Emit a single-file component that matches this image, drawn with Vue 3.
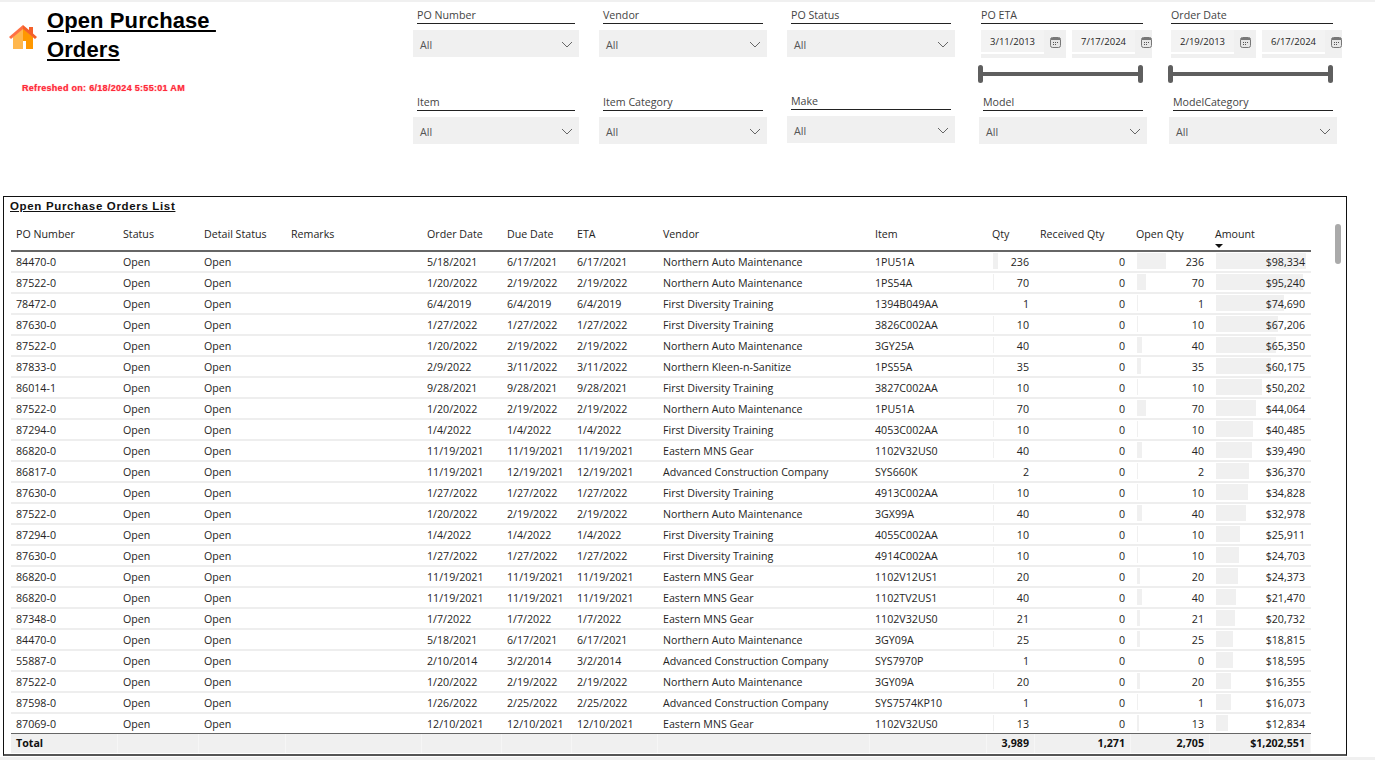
<template>
  <div class="page">
    <header class="top">
      <div class="brand">
        <svg class="home" viewBox="0 0 28 24">
          <path d="M4 12 L14 3 V24 H11 V16 H4 Z M4 16 H11 V24 H4 Z" fill="#ffb74d" />
          <path d="M14 3 L24 12 V24 H17 V16 H14 Z" fill="#ff9800" />
          <path d="M14 0 L0 12 L2 14 L14 4 Z" fill="#ff7043" />
          <path d="M14 0 L20 5 V2 H24 V8.5 L28 12 L26 14 L14 4 Z" fill="#f4602a" />
        </svg>
        <div class="brand-text">
          <h1 class="title">Open Purchase <br />Orders</h1>
          <div class="refreshed">Refreshed on: 6/18/2024 5:55:01 AM</div>
        </div>
      </div>

      <div class="filters">
        <div v-for="f in slicers" :key="f.label" class="slicer" :class="f.cls">
          <div class="slicer-label">{{ f.label }}</div>
          <div v-if="f.dates" class="date-block">
            <div class="date-row">
              <div v-for="d in f.dates" :key="d" class="date-box">
                <span class="date-val">{{ d }}</span>
                <svg class="cal" viewBox="0 0 11 11">
                  <rect x="0.5" y="0.5" width="10" height="10" rx="2" fill="#e6e6e6" stroke="#777" />
                  <rect x="1" y="1" width="9" height="2" fill="#777" />
                  <path d="M3 5.5H4M5 5.5H6M7 5.5H8M3 7.5H4M5 7.5H6" stroke="#555" />
                </svg>
              </div>
            </div>
            <div class="range">
              <span class="knob"></span>
              <span class="track"></span>
              <span class="knob"></span>
            </div>
          </div>
          <div v-else class="dropdown">
            <span>All</span>
            <svg class="chev" viewBox="0 0 12 7"><path d="M1 1 L6 6 L11 1" fill="none" stroke="#666" /></svg>
          </div>
        </div>
      </div>
    </header>

    <section class="panel">
      <div class="panel-title">Open Purchase Orders List</div>
      <div class="table">
        <div class="row head">
          <div v-for="c in columns" :key="c.key" class="cell">
            {{ c.label }}
            <span v-if="c.key === 'amount'" class="sort"></span>
          </div>
        </div>
        <div class="body">
          <div v-for="(r, i) in rows" :key="i" class="row">
            <div v-for="c in columns" :key="c.key" class="cell" :class="{ num: c.num }">
              <span v-if="c.bar && barWidth(c, r)" class="bar" :style="{ width: barWidth(c, r) + 'px' }"></span>
              <span class="val">{{ c.money ? money(r[c.key]) : r[c.key] }}</span>
            </div>
          </div>
        </div>
        <div class="row total">
          <div class="cell">Total</div>
          <div class="cell"></div>
          <div class="cell"></div>
          <div class="cell"></div>
          <div class="cell"></div>
          <div class="cell"></div>
          <div class="cell"></div>
          <div class="cell"></div>
          <div class="cell"></div>
          <div class="cell num">3,989</div>
          <div class="cell num">1,271</div>
          <div class="cell num">2,705</div>
          <div class="cell num">$1,202,551</div>
        </div>
      </div>
      <div class="scroll-thumb"></div>
    </section>
  </div>
</template>

<script setup>
const slicers = [
  { label: "PO Number", cls: "narrow" },
  { label: "Vendor" },
  { label: "PO Status" },
  { label: "PO ETA", cls: "dates", dates: ["3/11/2013", "7/17/2024"] },
  { label: "Order Date", cls: "dates", dates: ["2/19/2013", "6/17/2024"] },
  { label: "Item", cls: "narrow" },
  { label: "Item Category" },
  { label: "Make", cls: "make" },
  { label: "Model" },
  { label: "ModelCategory" },
];

const columns = [
  { key: "po", label: "PO Number" },
  { key: "status", label: "Status" },
  { key: "detail", label: "Detail Status" },
  { key: "remarks", label: "Remarks" },
  { key: "order", label: "Order Date" },
  { key: "due", label: "Due Date" },
  { key: "eta", label: "ETA" },
  { key: "vendor", label: "Vendor" },
  { key: "item", label: "Item" },
  { key: "qty", label: "Qty", num: true, bar: 4.5 / 236 },
  { key: "received", label: "Received Qty", num: true },
  { key: "open", label: "Open Qty", num: true, bar: 29 / 236 },
  { key: "amount", label: "Amount", num: true, money: true, bar: 90 / 98334 },
];

const NAM = "Northern Auto Maintenance";
const FDT = "First Diversity Training";
const EMG = "Eastern MNS Gear";
const ACC = "Advanced Construction Company";
const NKS = "Northern Kleen-n-Sanitize";

// po, order, due, eta, vendor, item, qty, open, amount
const raw = [
  ["84470-0", "5/18/2021", "6/17/2021", "6/17/2021", NAM, "1PU51A", 236, 236, 98334],
  ["87522-0", "1/20/2022", "2/19/2022", "2/19/2022", NAM, "1PS54A", 70, 70, 95240],
  ["78472-0", "6/4/2019", "6/4/2019", "6/4/2019", FDT, "1394B049AA", 1, 1, 74690],
  ["87630-0", "1/27/2022", "1/27/2022", "1/27/2022", FDT, "3826C002AA", 10, 10, 67206],
  ["87522-0", "1/20/2022", "2/19/2022", "2/19/2022", NAM, "3GY25A", 40, 40, 65350],
  ["87833-0", "2/9/2022", "3/11/2022", "3/11/2022", NKS, "1PS55A", 35, 35, 60175],
  ["86014-1", "9/28/2021", "9/28/2021", "9/28/2021", FDT, "3827C002AA", 10, 10, 50202],
  ["87522-0", "1/20/2022", "2/19/2022", "2/19/2022", NAM, "1PU51A", 70, 70, 44064],
  ["87294-0", "1/4/2022", "1/4/2022", "1/4/2022", FDT, "4053C002AA", 10, 10, 40485],
  ["86820-0", "11/19/2021", "11/19/2021", "11/19/2021", EMG, "1102V32US0", 40, 40, 39490],
  ["86817-0", "11/19/2021", "12/19/2021", "12/19/2021", ACC, "SYS660K", 2, 2, 36370],
  ["87630-0", "1/27/2022", "1/27/2022", "1/27/2022", FDT, "4913C002AA", 10, 10, 34828],
  ["87522-0", "1/20/2022", "2/19/2022", "2/19/2022", NAM, "3GX99A", 40, 40, 32978],
  ["87294-0", "1/4/2022", "1/4/2022", "1/4/2022", FDT, "4055C002AA", 10, 10, 25911],
  ["87630-0", "1/27/2022", "1/27/2022", "1/27/2022", FDT, "4914C002AA", 10, 10, 24703],
  ["86820-0", "11/19/2021", "11/19/2021", "11/19/2021", EMG, "1102V12US1", 20, 20, 24373],
  ["86820-0", "11/19/2021", "11/19/2021", "11/19/2021", EMG, "1102TV2US1", 40, 40, 21470],
  ["87348-0", "1/7/2022", "1/7/2022", "1/7/2022", EMG, "1102V32US0", 21, 21, 20732],
  ["84470-0", "5/18/2021", "6/17/2021", "6/17/2021", NAM, "3GY09A", 25, 25, 18815],
  ["55887-0", "2/10/2014", "3/2/2014", "3/2/2014", ACC, "SYS7970P", 1, 0, 18595],
  ["87522-0", "1/20/2022", "2/19/2022", "2/19/2022", NAM, "3GY09A", 20, 20, 16355],
  ["87598-0", "1/26/2022", "2/25/2022", "2/25/2022", ACC, "SYS7574KP10", 1, 1, 16073],
  ["87069-0", "12/10/2021", "12/10/2021", "12/10/2021", EMG, "1102V32US0", 13, 13, 12834],
];

const rows = raw.map(([po, order, due, eta, vendor, item, qty, open, amount]) => ({
  po,
  status: "Open",
  detail: "Open",
  remarks: "",
  order,
  due,
  eta,
  vendor,
  item,
  qty,
  received: 0,
  open,
  amount,
}));

function barWidth(c, r) {
  return Math.round(r[c.key] * c.bar * 10) / 10;
}

function money(n) {
  return "$" + n.toLocaleString("en-US");
}
</script>

<style>
html,
body {
  margin: 0;
  background: #fff;
}
</style>

<style scoped>
.page {
  width: 1375px;
  height: 760px;
  overflow: hidden;
  box-sizing: border-box;
  border-top: 2px solid #f0f0f0;
  border-bottom: 3px solid #f0f0f0;
  font-family: "Open Sans", "Liberation Sans", sans-serif;
  font-size: 10.67px;
  color: #252423;
  position: relative;
}

.top {
  display: flex;
  height: 194px;
}

.brand {
  width: 413px;
  flex: none;
  display: flex;
  align-items: flex-start;
}

.home {
  width: 28px;
  height: 24px;
  margin: 23px 0 0 9px;
}

.brand-text {
  margin-left: 10px;
  padding-top: 4px;
}

.title {
  margin: 0;
  font: bold 22px/29px "Liberation Sans", Arial, sans-serif;
  letter-spacing: 0.1px;
  color: #000;
  text-decoration: underline;
  white-space: pre-wrap;
}

.refreshed {
  margin: 19px 0 0 -25px;
  font: bold 9px/10px "Liberation Sans", Arial, sans-serif;
  letter-spacing: 0.3px;
  color: #ff2a3a;
  text-shadow: 0 0 1px rgba(255, 40, 60, 0.6);
}

.filters {
  width: 940px;
  flex: none;
  display: grid;
  grid-template-columns: 186px 188px 192px 190px 180px;
  grid-auto-rows: 87px;
  padding-top: 7px;
}

.slicer-label {
  width: 160px;
  margin-left: 4px;
  border-bottom: 1px solid #222;
  padding-bottom: 1px;
  line-height: 13px;
  color: #444;
}

.narrow .slicer-label {
  width: 158px;
}

.dates .slicer-label {
  width: 162px;
  margin-left: 2px;
}

.dropdown {
  width: 168px;
  height: 27px;
  margin-top: 6px;
  padding: 2px 6px 0 7px;
  box-sizing: border-box;
  background: #f0f0f0;
  display: flex;
  align-items: center;
  justify-content: space-between;
  color: #555;
}

.narrow .dropdown {
  width: 166px;
}

.chev {
  width: 12px;
  height: 7px;
}

.make {
  margin-top: -1px;
}

.date-block {
  margin-top: 6px;
  margin-left: 2px;
}

.date-row {
  display: flex;
  gap: 6px;
}

.date-box {
  width: 85px;
  height: 28px;
  flex: none;
  display: flex;
  align-items: flex-start;
  background: #f0f0f0;
  font-size: 9.5px;
  color: #252423;
  overflow: hidden;
}

.date-box + .date-box {
  width: 80px;
}

.date-val {
  width: 63px;
  height: 24px;
  flex: none;
  box-sizing: border-box;
  padding-left: 9px;
  line-height: 24px;
  background: #f3f3f3;
  border-bottom: 2px solid #fff;
}

.cal {
  width: 11px;
  height: 11px;
  flex: none;
  margin: 7px 0 0 6px;
}

.range {
  width: 165px;
  margin: 7px 0 0 -3px;
  display: flex;
  align-items: center;
}

.track {
  flex: 1;
  height: 4px;
  background: #5f5f5f;
}

.knob {
  width: 5px;
  height: 18px;
  border-radius: 3px;
  background: #5f5f5f;
}

.panel {
  position: relative;
  width: 1344px;
  height: 560px;
  margin-left: 3px;
  box-sizing: border-box;
  border: 1px solid #111;
  border-bottom: 2px solid #555;
  padding-left: 7px;
  background: #fff;
}

.panel-title {
  font: bold 11.5px/16px "Liberation Sans", Arial, sans-serif;
  letter-spacing: 0.66px;
  color: #111;
  text-decoration: underline;
  height: 16px;
  margin: 1px 0 0 -1px;
}

.table {
  width: 1300px;
  margin-top: 9px;
}

.row {
  display: grid;
  grid-template-columns: 107px 81px 87px 136px 80px 70px 86px 212px 117px 48px 96px 79px 101px;
  height: 21px;
  box-sizing: border-box;
  border-bottom: 2px solid #eee;
}

.cell {
  position: relative;
  padding: 0 6px 0 5px;
  line-height: 21px;
  white-space: nowrap;
  color: #252423;
}

.cell.num {
  text-align: right;
}

.bar {
  position: absolute;
  left: 6px;
  top: 1px;
  height: 16px;
  background: #f0f0f0;
}

.val {
  position: relative;
}

.head {
  height: 29px;
  border-bottom: 2px solid #666;
}

.head .cell {
  line-height: 22px;
}

.sort {
  position: absolute;
  left: 5px;
  top: 21px;
  border-left: 4px solid transparent;
  border-right: 4px solid transparent;
  border-top: 4px solid #111;
}

.total {
  height: 20px;
  border-top: 1px solid #666;
  border-bottom: 0;
  margin-top: -2px;
  background: #f0f0f0;
}

.total .cell {
  font-weight: 700;
  line-height: 19px;
  color: #111;
  border-right: 1px solid #f6f6f6;
}

.total .cell.num {
  text-align: right;
  padding-right: 5px;
}

.scroll-thumb {
  position: absolute;
  left: 1331px;
  top: 27px;
  width: 6px;
  height: 40px;
  border-radius: 3px;
  background: #aaa;
}
</style>
